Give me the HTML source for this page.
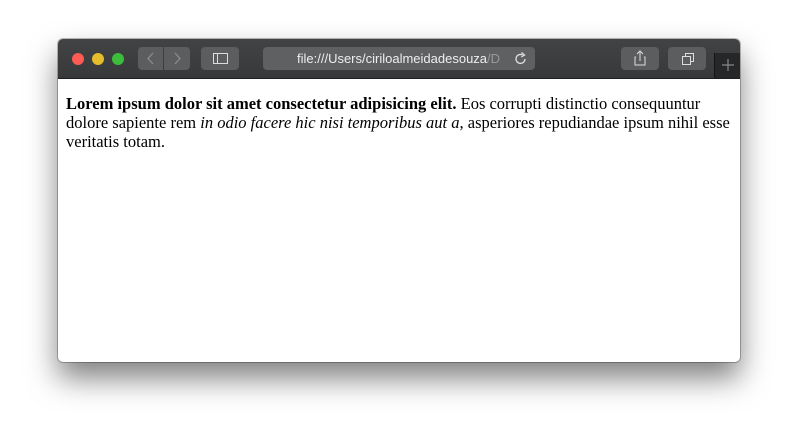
<!DOCTYPE html>
<html><head><style>
body{margin:0;width:797px;height:437px;background:#fff;position:relative;overflow:hidden;font-family:"Liberation Serif",serif}
.win{position:absolute;left:58px;top:39px;width:682px;height:323px;border-radius:5px;overflow:hidden;box-shadow:0 16px 30px rgba(0,0,0,.5),0 0 0 1px rgba(0,0,0,.25);background:#fff}
.bar{position:absolute;left:0;top:0;width:682px;height:39px;background:linear-gradient(#414344,#37393a);border-bottom:1px solid #1e1e1e}
.dot{position:absolute;top:14px;width:12px;height:12px;border-radius:50%}
.btn{position:absolute;top:8px;height:23px;background:#5b5d5f;border-radius:4px}
.url{position:absolute;left:205px;top:8px;width:272px;height:23px;background:#5e6062;border-radius:4px;color:#eee;font:13px "Liberation Sans",sans-serif;line-height:23px}
.tab{position:absolute;left:656px;top:14px;width:26px;height:25px;background:#262728;border-left:1px solid #151515}
p{position:absolute;left:8px;top:55px;margin:0;width:672px;font-size:16.5px;line-height:19px;color:#000}
</style></head><body>
<div class="win">
<div class="bar">
<div class="dot" style="left:14px;background:#fd5b54"></div>
<div class="dot" style="left:34px;background:#e5bc2b"></div>
<div class="dot" style="left:54px;background:#3dbd3c"></div>
<div class="btn" style="left:80px;width:25px;border-radius:4px 0 0 4px"><svg width="25" height="23"><path d="M15 6 L10 11.5 L15 17" stroke="#8a8c8e" stroke-width="1.3" fill="none"/></svg></div>
<div class="btn" style="left:106px;width:26px;border-radius:0 4px 4px 0"><svg width="26" height="23"><path d="M11 6 L16 11.5 L11 17" stroke="#8a8c8e" stroke-width="1.3" fill="none"/></svg></div>
<div class="btn" style="left:143px;width:38px"><svg width="38" height="23"><rect x="12.5" y="6.5" width="14" height="10" stroke="#ddd" fill="none"/><line x1="16.5" y1="6.5" x2="16.5" y2="16.5" stroke="#ddd"/></svg></div>
<div class="url"><span style="position:absolute;left:34px">file:///Users/ciriloalmeidadesouza<span style="color:#999">/D</span></span>
<svg style="position:absolute;left:250px;top:4px" width="16" height="16"><path d="M12 8 A4.5 4.5 0 1 1 9.5 3.9" stroke="#ddd" stroke-width="1.3" fill="none"/><path d="M8.5 1.5 L11.5 4 L8.3 6" stroke="#ddd" stroke-width="1.3" fill="none"/></svg></div>
<div class="btn" style="left:563px;width:38px"><svg width="38" height="23"><path d="M15 10 H14 V18 H24 V10 H23" stroke="#ddd" fill="none"/><path d="M19 14 V4 M16 7 L19 4 L22 7" stroke="#ddd" fill="none"/></svg></div>
<div class="btn" style="left:610px;width:38px"><svg width="38" height="23"><rect x="14.5" y="9.5" width="8" height="8" stroke="#ddd" fill="none"/><path d="M17.5 9.5 V6.5 H25.5 V14.5 H22.5" stroke="#ddd" fill="none"/></svg></div>
<div class="tab"><svg width="26" height="25"><path d="M13 6 V18 M7 12 H19" stroke="#888" stroke-width="1.2"/></svg></div>
</div>
<p><b>Lorem ipsum dolor sit amet consectetur adipisicing elit.</b> Eos corrupti distinctio consequuntur dolore sapiente rem <i>in odio facere hic nisi temporibus aut a</i>, asperiores repudiandae ipsum nihil esse veritatis totam.</p>
</div>
</body></html>
